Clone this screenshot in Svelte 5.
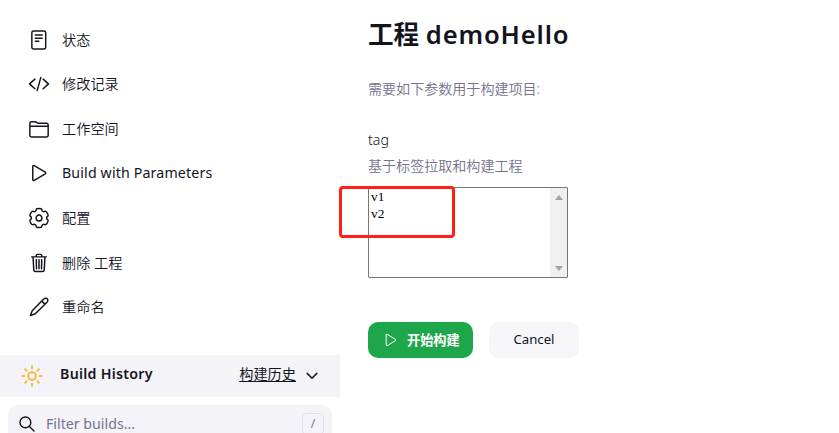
<script>
  const polar = (deg, r) => {
    const a = ((deg - 90) * Math.PI) / 180;
    return [12 + r * Math.cos(a), 12 + r * Math.sin(a)];
  };

  // Six-lobed cog: one rounded tooth and one shallow valley per 60 degrees.
  function cogPath() {
    const pts = [];
    for (let k = 0; k < 6; k++) {
      pts.push(polar(k * 60 - 17, 10.9), polar(k * 60 + 17, 10.9), polar(k * 60 + 21, 8.4), polar(k * 60 + 39, 8.4));
    }
    const mid = (a, b) => `${(a[0] + b[0]) / 2} ${(a[1] + b[1]) / 2}`;
    let d = `M${mid(pts[pts.length - 1], pts[0])}`;
    pts.forEach((p, i) => {
      d += `Q${p[0]} ${p[1]} ${mid(p, pts[(i + 1) % pts.length])}`;
    });
    return d + 'Z';
  }

  const tasks = [
    { label: '状态', d: 'M6 2.2h11.5a1.8 1.8 0 0 1 1.8 1.8v16a1.8 1.8 0 0 1-1.8 1.8H6a1.8 1.8 0 0 1-1.8-1.8v-16A1.8 1.8 0 0 1 6 2.2zM8 6.5h7.5M8 10h7.5M8 13.4h3.8' },
    { label: '修改记录', d: 'M7.5 6.7L1.7 11.9l5.8 5.2M16.5 6.7l5.8 5.2-5.8 5.2M14 4.8l-4 14.4' },
    { label: '工作空间', d: 'M2 9V5.9a1.8 1.8 0 0 1 1.8-1.8h4.2c1.4 0 1.7 1.7 3.2 1.7H20.2a1.8 1.8 0 0 1 1.8 1.8v11.3a1.8 1.8 0 0 1-1.8 1.8H3.8a1.8 1.8 0 0 1-1.8-1.8zM2 9h20' },
    { label: 'Build with Parameters', d: 'M5.2 4.9v14.2c0 1 .8 1.3 1.6.9l12-7.1c.8-.5.8-1.3 0-1.8l-12-7.1c-.8-.4-1.6-.1-1.6.9z', latin: true },
    { label: '配置', d: cogPath() + 'M15.2 12a3.2 3.2 0 1 1-6.4 0a3.2 3.2 0 1 1 6.4 0z' },
    { label: '删除 工程', d: 'M4 5.3h16M5.5 5.3l.8 14.2a1.8 1.8 0 0 0 1.8 1.7h7.8a1.8 1.8 0 0 0 1.8-1.7l.8-14.2M9 5.2V3.8A1.2 1.2 0 0 1 10.2 2.6h3.6A1.2 1.2 0 0 1 15 3.8v1.4M12 8.3v10M9 8.3l.3 10M15 8.3l-.3 10' },
    { label: '重命名', d: 'M16.6 3.8c1.5-1.6 3.3-1.9 4.4-.8 1.1 1.1.8 2.9-.8 4.4L7.9 19.4l-5.3 2 2-5.3zM15.5 5q.4 3 3.5 3.5' },
  ];
  const rays = [0, 45, 90, 135, 180, 225, 270, 315];
  const tags = ['v1', 'v2'];
</script>

<div class="page">
  <aside>
    <nav>
      {#each tasks as task}
        <a class="task" class:latin={task.latin} href="#task">
          <svg viewBox="0 0 24 24"><path d={task.d} /></svg>
          <span>{task.label}</span>
        </a>
      {/each}
    </nav>
    <div class="history">
      <svg class="sun" viewBox="0 0 24 24">
        <circle cx="12" cy="12" r="4.3" />
        {#each rays as r}
          <path d="M12 .5v4" transform="rotate({r} 12 12)" />
        {/each}
      </svg>
      <strong>Build History</strong>
      <a class="trend" href="#trend">构建历史</a>
      <svg class="chevron" viewBox="0 0 12 8"><path d="M1.2 1.4L6 6.2l4.8-4.8" /></svg>
    </div>
    <div class="filter">
      <svg viewBox="0 0 16 16"><circle cx="6.4" cy="6.4" r="5.4" /><path d="M10.4 10.4L15 15" /></svg>
      <span>Filter builds...</span>
      <kbd>/</kbd>
    </div>
  </aside>

  <main>
    <h1>工程 <span>demoHello</span></h1>
    <p class="intro">需要如下参数用于构建项目:</p>
    <div class="name">tag</div>
    <div class="desc">基于标签拉取和构建工程</div>
    <div class="select">
      <div class="options">
        {#each tags as t}<div>{t}</div>{/each}
      </div>
      <div class="scroll">
        <svg viewBox="0 0 8 5"><path d="M0 5l4-5 4 5z" /></svg>
        <svg viewBox="0 0 8 5"><path d="M0 0l4 5 4-5z" /></svg>
      </div>
      <div class="mark"></div>
    </div>
    <div class="buttons">
      <button class="primary">
        <svg viewBox="0 0 12 14"><path d="M1.2 1.8v10.4c0 .6.5.8 1 .5l8.5-5.2c.5-.3.5-.7 0-1L2.2 1.3c-.5-.3-1-.1-1 .5z" /></svg>
        <span>开始构建</span>
      </button>
      <button class="cancel">Cancel</button>
    </div>
  </main>
</div>

<style>
  :global(body) { background: #fff; overflow: hidden; }
  .page {
    display: flex;
    width: 839px;
    height: 433px;
    overflow: hidden;
    color: #14141f;
    font-family: "Noto Sans", "Noto Sans CJK SC", sans-serif;
    font-size: 14.2px;
    font-weight: 350;
  }
  svg { display: block; flex: none; fill: none; stroke: #14141f; stroke-linecap: round; stroke-linejoin: round; overflow: visible; }
  a { color: inherit; }
  aside { width: 340px; flex: none; }
  nav { padding-top: 17.4px; height: 338px; box-sizing: border-box; }
  .task { display: flex; align-items: center; height: 44.6px; padding-left: 28px; gap: 12px; text-decoration: none; line-height: 20px; }
  .latin { letter-spacing: 0.15px; font-weight: 400; }
  .task svg { width: 22px; height: 22px; stroke-width: 1.6; }
  .history { display: flex; align-items: center; height: 42px; margin-top: 17px; padding: 0 22px 0 21px; background: #f3f3f8; box-sizing: border-box; }
  .sun { width: 22px; height: 22px; stroke: #fdb62f; stroke-width: 2; stroke-linecap: butt; }
  .history strong { margin-left: 17px; flex: 1; font-weight: 600; line-height: 20px; padding-bottom: 4px; letter-spacing: 0.28px; }
  .trend { line-height: 20px; padding-bottom: 4px; font-weight: 400; text-underline-offset: 2px; }
  .chevron { width: 12px; height: 8px; margin-left: 10px; stroke-width: 1.5; }
  .filter { display: flex; align-items: center; height: 37px; margin: 8px 8px 0; padding: 0 8px 0 11px; border-radius: 10px; background: #f3f3f8; box-sizing: border-box; color: #73738c; }
  .filter svg { width: 16px; height: 16px; stroke-width: 1.4; }
  .filter span { margin-left: 11px; flex: 1; font-weight: 400; }
  kbd { width: 22px; height: 22px; box-sizing: border-box; border: 1px solid #dfdfe8; border-radius: 5px; text-align: center; font: 12px/20px "Noto Sans", sans-serif; }
  main { padding-left: 28px; flex: 1; }
  h1 { margin: 17px 0 0; font-size: 25.6px; line-height: 36px; font-weight: 600; }
  h1 span { letter-spacing: 0.85px; }
  .intro { margin: 26px 0 0; line-height: 20px; color: #73738c; font-size: 14.05px; }
  .name { margin-top: 31px; line-height: 20px; }
  .desc { margin-top: 6px; line-height: 20px; color: #73738c; font-size: 14.05px; }
  .select { position: relative; display: flex; width: 200px; height: 91px; margin-top: 11px; box-sizing: border-box; border: 1px solid #767676; border-radius: 1px; }
  .options { flex: 1; padding: 0 2px; font: 13.33px/17px "Liberation Serif", serif; color: #000; }
  .scroll { display: flex; flex-direction: column; justify-content: space-between; align-items: center; width: 17px; padding: 7px 0 6px; box-sizing: border-box; background: #f0f0f0; }
  .scroll svg { width: 8px; height: 5px; fill: #a3a3a3; stroke: none; }
  .mark { position: absolute; left: -30px; top: -2px; width: 116px; height: 52px; box-sizing: border-box; border: 3px solid #ff2013; border-radius: 4px; }
  .buttons { display: flex; gap: 16px; margin-top: 44px; }
  button { height: 36px; padding: 0; border: 0; border-radius: 10px; font: 13.2px/20px "Noto Sans", "Noto Sans CJK SC", sans-serif; color: #14141f; }
  .primary { display: flex; align-items: center; width: 105px; padding-left: 17px; gap: 10px; background: #1ea64b; color: #fff; font-weight: 700; }
  .primary svg { width: 12px; height: 14px; stroke: #fff; stroke-width: 1; }
  .cancel { width: 90px; background: #f6f6f9; padding-bottom: 2px; }
</style>
